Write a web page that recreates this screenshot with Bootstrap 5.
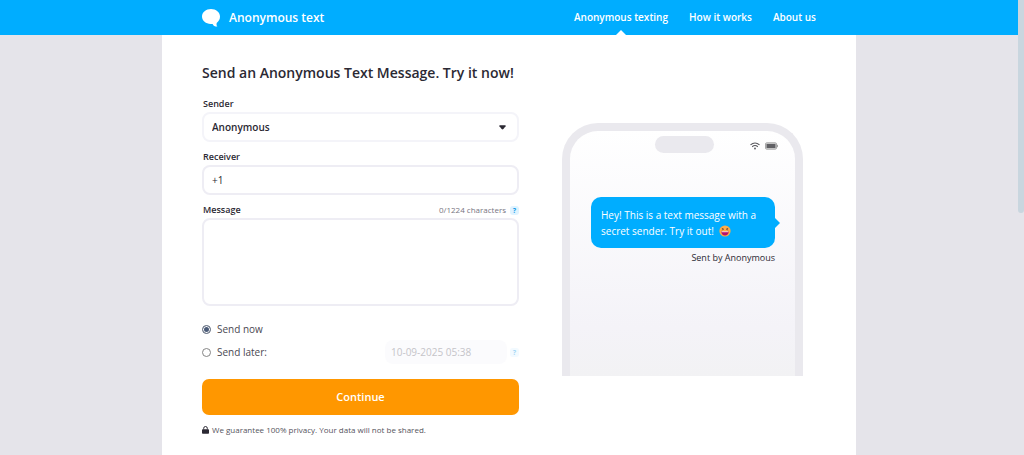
<!DOCTYPE html>
<html lang="en">
<head>
<meta charset="utf-8">
<meta name="viewport" content="width=device-width, initial-scale=1">
<title>Anonymous text</title>
<link href="https://cdn.jsdelivr.net/npm/bootstrap@5.3.0/dist/css/bootstrap.min.css" rel="stylesheet">
<style>
  :root { --sky: #00adff; --ink: #2b2933; --line: #eeedf4; }
  body { font-family: "Open Sans", "Noto Sans", sans-serif; font-size: 10px; line-height: 16px; color: var(--ink); background: #e5e4ea; padding-right: 6px; }
  .topbar { background: var(--sky); }
  .wrap { max-width: 694px; padding-left: 40px; padding-right: 40px; }
  .topbar .wrap { height: 35px; }
  .brand { font-size: 12px; font-weight: 600; gap: 9px; }
  .menu { gap: 21px; margin: 0; }
  .menu .nav-link { font-size: 10px; font-weight: 600; line-height: 35px; padding: 0; color: #fff; position: relative; }
  .menu .active::after { content: ""; position: absolute; left: 50%; bottom: 0; margin-left: -5px; border: 5px solid transparent; border-top: 0; border-bottom-color: #fff; }
  .sheet { background: #fff; padding-top: 28px; gap: 43px; }
  .send-form { flex: 0 1 317px; min-width: 0; }
  h1 { font-size: 14px; line-height: 20px; font-weight: 600; margin: 0 0 13px; }
  .form-label { font-size: 9px; font-weight: 600; line-height: 16px; margin: 0; padding-left: 1px; }
  .field { border: 2px solid var(--line); border-radius: 8px; font-size: 10px; line-height: 16px; color: var(--ink); box-shadow: none; padding: 5px 8px; }
  .form-select.field { height: 30px; border-color: #f4f4f9; font-weight: 600; background-image: url("data:image/svg+xml,%3Csvg xmlns='http://www.w3.org/2000/svg' viewBox='0 0 8 5'%3E%3Cpath d='M1 0h6q1 0 .5 1L5 4.300Q4 5.200 3 4.300L.5 1Q0 0 1 0z' fill='%232b2933'/%3E%3C/svg%3E"); background-size: 7px 5px; background-position: right 11px center; margin-bottom: 7px; }
  .phone-field { height: 30px; margin-bottom: 7px; }
  .message-field { height: 88px; resize: none; }
  .counter { font-size: 8px; color: #77757f; }
  .hint { width: 9px; height: 9px; border-radius: 3px; background: #dff3ff; color: #149be8; font-size: 7px; line-height: 9px; font-weight: 700; border: 0; padding: 0; }
  .hint.faded { opacity: .4; }
  .options { margin-top: 13px; gap: 1px; }
  .options .row-item { gap: 6px; }
  .options input[type=radio] { width: 9px; height: 9px; margin: 0; border: 1px solid #858585; box-shadow: none; }
  .options input[type=radio]:checked { background: #4b5b78; border-color: #6f7888; box-shadow: inset 0 0 0 1px #fff; }
  .options label { color: #4a4852; line-height: 20px; }
  .date-field { width: 122px; height: 24px; border: 0; border-radius: 8px; font-size: 10px; background: #fbfbfd; color: #c5c4c9; padding: 4px 6px; margin-right: -3px; }
  .date-field:disabled { background: #fbfbfd; opacity: 1; }
  .go { background: #ff9700; color: #fff; font-size: 11px; font-weight: 600; line-height: 16px; height: 36px; border: 0; border-radius: 7px; margin-top: 15px; }
  .go:hover { background: #f08e00; color: #fff; }
  .privacy { font-size: 8px; color: #55535c; margin: 7px 0 0; gap: 3px; }
  .phone { flex: 0 1 241px; height: 253px; margin-top: 60px; border: 8px solid #eae9ee; border-bottom: 0; border-radius: 36px 36px 0 0; background: linear-gradient(#fff, #f4f3f8 80%, #f2f2f4); padding: 5px 20px 0; }
  .status { display: grid; grid-template-columns: 1fr 59px 1fr; padding-left: 1px; margin-right: -3px; }
  .island { height: 17px; border-radius: 9px; background: #eae9ee; }
  .status-icons { gap: 5px; padding-top: 2px; }
  .bubble { position: relative; background: var(--sky); color: #fff; border-radius: 10px; font-size: 10px; line-height: 16px; padding: 10px; margin: 44px 0 0 1px; height: 51px; white-space: nowrap; }
  .bubble svg { margin-left: 3px; }
  .bubble::after { content: ""; position: absolute; left: 100%; top: 50%; margin-top: -5px; border: 5px solid transparent; border-right: 0; border-left-color: var(--sky); }
  .sent-by { font-size: 9px; margin: 2px 0 0; }
  .scroll-thumb { width: 6px; height: 213px; background: #c9d6df; border-radius: 0 0 3px 3px; }
</style>
</head>
<body class="min-vh-100 d-flex flex-column">
<header class="topbar">
  <div class="wrap container-fluid d-flex align-items-center justify-content-between">
    <a href="#" class="brand d-flex align-items-center text-white text-decoration-none">
      <svg width="18" height="18" viewBox="0 0 18 18" fill="#fff" aria-hidden="true"><path d="M9 0C4 0 0 3.300 0 7.600s4 7.400 8.600 7.400c.8 0 1.400 0 2-.1.900 1.800 2.500 2.900 4.900 2.700-.9-.8-1.200-1.900-.8-3.700C16.900 12.500 18 10.200 18 7.600 18 3.300 14 0 9 0z"/></svg>
      <span>Anonymous text</span>
    </a>
    <nav class="menu nav">
      <a class="nav-link active" href="#">Anonymous texting</a>
      <a class="nav-link" href="#">How it works</a>
      <a class="nav-link" href="#">About us</a>
    </nav>
  </div>
</header>
<main class="sheet wrap container-fluid flex-grow-1 d-flex align-items-start">
  <form class="send-form">
    <h1>Send an Anonymous Text Message. Try it now!</h1>
    <label class="form-label d-block" for="sender">Sender</label>
    <select class="form-select field" id="sender"><option>Anonymous</option></select>
    <label class="form-label d-block" for="receiver">Receiver</label>
    <input class="form-control field phone-field" id="receiver" type="tel" value="+1">
    <div class="d-flex align-items-center">
      <label class="form-label me-auto" for="message">Message</label>
      <span class="counter me-1">0/1224 characters</span>
      <button type="button" class="hint" aria-label="Message length help">?</button>
    </div>
    <textarea class="form-control field message-field" id="message"></textarea>
    <div class="options d-flex flex-column">
      <div class="row-item d-flex align-items-center">
        <input class="form-check-input" type="radio" name="when" id="now" checked>
        <label for="now">Send now</label>
      </div>
      <div class="row-item d-flex align-items-center">
        <input class="form-check-input" type="radio" name="when" id="later">
        <label class="me-auto" for="later">Send later:</label>
        <input class="form-control date-field" type="text" aria-label="Send date" value="10-09-2025 05:38" disabled>
        <button type="button" class="hint faded" aria-label="Date help">?</button>
      </div>
    </div>
    <button type="submit" class="btn go w-100">Continue</button>
    <p class="privacy d-flex align-items-center">
      <svg width="7" height="8" viewBox="0 0 7 8" aria-hidden="true"><path d="M1.700 3.500V2.300a1.800 1.800 0 0 1 3.600 0v1.200" fill="none" stroke="#2b2933" stroke-width="1"/><rect y="3.300" width="7" height="4.500" rx=".8" fill="#2b2933"/></svg>
      <span>We guarantee 100% privacy. Your data will not be shared.</span>
    </p>
  </form>
  <section class="phone" aria-label="Message preview">
    <div class="status align-items-center">
      <span></span>
      <span class="island"></span>
      <span class="status-icons d-flex justify-content-end align-items-center">
        <svg width="10" height="8" viewBox="0 0 10 8" fill="none" stroke="#55555a" stroke-width="1.100" aria-hidden="true"><path d="M.5 2.900Q5-1 9.500 2.900M2.200 4.700Q5 2.400 7.800 4.700"/><circle cx="5" cy="6.500" r=".9" fill="#55555a" stroke="none"/></svg>
        <svg width="13" height="8" viewBox="0 0 13 8" aria-hidden="true"><rect x=".5" y=".8" width="11" height="6.400" rx="1.200" fill="#ddd" stroke="#aaa"/><rect x="1.500" y="1.900" width="9" height="4.200" fill="#606064"/><path d="M12.400 2.800v2.400" stroke="#999"/></svg>
      </span>
    </div>
    <div class="bubble">Hey! This is a text message with a<br>secret sender. Try it out! <svg class="align-text-bottom" width="12" height="14" viewBox="0 0 12 14" role="img" aria-label="Laughing face"><circle cx="6" cy="7" r="5.600" fill="#ffad45"/><path d="M2.800 4.200l1.900 1-1.900.9M9.200 4.200l-1.900 1 1.900.9" fill="none" stroke="#684038" stroke-width=".8"/><path d="M2.200 7.400h7.600Q9.300 11.500 6 11.500T2.200 7.400z" fill="#b5126b"/><path d="M2.700 7.400h6.600v.8H2.700z" fill="#fff"/></svg></div>
    <p class="sent-by text-end">Sent by Anonymous</p>
  </section>
</main>
<div class="scroll-thumb position-fixed top-0 end-0" aria-hidden="true"></div>
<script src="https://cdn.jsdelivr.net/npm/bootstrap@5.3.0/dist/js/bootstrap.bundle.min.js"></script>
</body>
</html>
